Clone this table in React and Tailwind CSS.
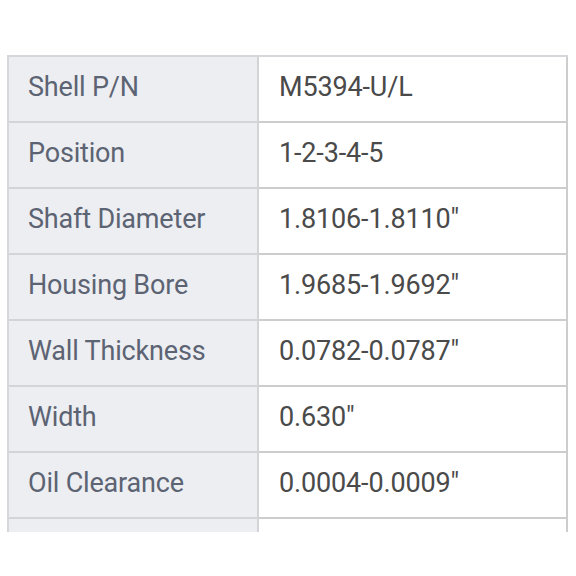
const rows = [
  ['Shell P/N', 'M5394-U/L'],
  ['Position', '1-2-3-4-5'],
  ['Shaft Diameter', '1.8106-1.8110"'],
  ['Housing Bore', '1.9685-1.9692"'],
  ['Wall Thickness', '0.0782-0.0787"'],
  ['Width', '0.630"'],
  ['Oil Clearance', '0.0004-0.0009"'],
  ['', ''],
];

export default function App() {
  return (
    <div className="w-[576px] h-[576px] bg-white pt-[55px] pl-[7px]" style={{ fontFamily: 'Roboto, "Liberation Sans", sans-serif' }}>
      <div className="w-[561px] h-[477px] overflow-hidden">
        <div className="border-t-2 border-l-2 border-[#d6d7da]">
          {rows.map(([label, value], i) => (
            <div key={i} className="grid grid-cols-[250px_309px] h-[66px]">
              <div className="bg-[#eceef1] border-b-2 border-r-2 border-[#d3d4d7] flex items-center pl-[19px] pb-[4px] text-[27px] text-[#5c6373] tracking-[-0.18px]">
                {label}
              </div>
              <div className="bg-white border-b-2 border-r-2 border-[#cdcdcd] flex items-center pl-[20px] pb-[3px] text-[27px] text-[#4a4a4a] tracking-[-0.15px]">
                {value}
              </div>
            </div>
          ))}
        </div>
      </div>
    </div>
  );
}
